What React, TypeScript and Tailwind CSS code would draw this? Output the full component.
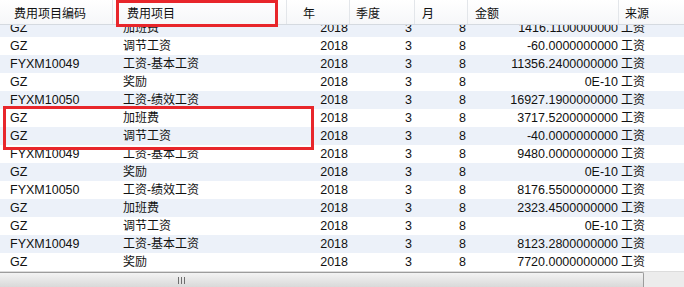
import React from 'react';

type Row = { code: string; item: string; amount: string };

const rows: Row[] = [
    { code: 'GZ', item: '加班费', amount: '1416.1100000000' },
    { code: 'GZ', item: '调节工资', amount: '-60.0000000000' },
    { code: 'FYXM10049', item: '工资-基本工资', amount: '11356.2400000000' },
    { code: 'GZ', item: '奖励', amount: '0E-10' },
    { code: 'FYXM10050', item: '工资-绩效工资', amount: '16927.1900000000' },
    { code: 'GZ', item: '加班费', amount: '3717.5200000000' },
    { code: 'GZ', item: '调节工资', amount: '-40.0000000000' },
    { code: 'FYXM10049', item: '工资-基本工资', amount: '9480.0000000000' },
    { code: 'GZ', item: '奖励', amount: '0E-10' },
    { code: 'FYXM10050', item: '工资-绩效工资', amount: '8176.5500000000' },
    { code: 'GZ', item: '加班费', amount: '2323.4500000000' },
    { code: 'GZ', item: '调节工资', amount: '0E-10' },
    { code: 'FYXM10049', item: '工资-基本工资', amount: '8123.2800000000' },
    { code: 'GZ', item: '奖励', amount: '7720.0000000000' },
];

const cols = 'grid grid-cols-[113px_174px_63px_65px_53px_151px_65px]';

export default function App() {
    return (
        <div
            className="relative w-[684px] h-[287px] overflow-hidden bg-white text-[#111] select-none"
            style={{ fontFamily: '"Liberation Sans", "Noto Sans CJK SC", sans-serif' }}
        >
            {/* Header */}
            <div className={`${cols} h-[25px] text-[12px] bg-gradient-to-b from-white to-[#f6f7f9] border-b border-[#d5dae0]`}>
                <div className="flex items-center pl-[14px] pt-[3px] border-r border-[#e3e6ea]">费用项目编码</div>
                <div className="flex items-center pl-[14px] pt-[3px] border-r border-[#e3e6ea]">费用项目</div>
                <div className="flex items-center pl-[16px] pt-[3px] border-r border-[#e3e6ea]">年</div>
                <div className="flex items-center pl-[6px] pt-[3px] border-r border-[#e3e6ea]">季度</div>
                <div className="flex items-center pl-[7px] pt-[3px] border-r border-[#e3e6ea]">月</div>
                <div className="flex items-center pl-[7px] pt-[3px] border-r border-[#e3e6ea]">金额</div>
                <div className="flex items-center pl-[6px] pt-[3px]">来源</div>
            </div>

            {/* Body, scrolled down a few px */}
            <div className="h-[246px] overflow-hidden">
                <div className="-mt-[6px]">
                    {rows.map((r, i) => (
                        <div
                            key={i}
                            className={`${cols} h-[18px] items-center text-[12.5px] leading-none ${i % 2 === 0 ? 'bg-[#ecf1f9]' : 'bg-white'}`}
                        >
                            <div className="pl-[10px] whitespace-nowrap">{r.code}</div>
                            <div className="pl-[10px] text-[12px] whitespace-nowrap">{r.item}</div>
                            <div className="text-right pr-[2px]">2018</div>
                            <div className="text-right pr-[3px]">3</div>
                            <div className="text-right pr-[2px]">8</div>
                            <div className="text-right pr-[1px] whitespace-nowrap">{r.amount}</div>
                            <div className="pl-[2px] text-[12px] whitespace-nowrap">工资</div>
                        </div>
                    ))}
                </div>
            </div>

            {/* Horizontal scrollbar */}
            <div className="flex h-[16px] bg-[#ececec] border-t border-[#dcdcdc]">
                <div className="relative w-[644px] h-full bg-gradient-to-b from-[#f3f3f3] to-[#d9d9d9] border-t border-r border-[#9c9c9c] rounded-tr-[2px]">
                    <div className="absolute left-[178px] top-[4px] flex gap-[2px]">
                        <span className="w-[1px] h-[7px] bg-[#6e6e6e]" />
                        <span className="w-[1px] h-[7px] bg-[#6e6e6e]" />
                        <span className="w-[1px] h-[7px] bg-[#6e6e6e]" />
                    </div>
                </div>
                <div className="flex-1" />
            </div>

            {/* Annotation boxes */}
            <div className="absolute left-[116px] top-0 w-[162px] h-[27px] border-[3px] border-[#e8262b]" />
            <div className="absolute left-[3px] top-[106px] w-[311px] h-[44px] border-[3px] border-[#e8262b]" />
        </div>
    );
}
